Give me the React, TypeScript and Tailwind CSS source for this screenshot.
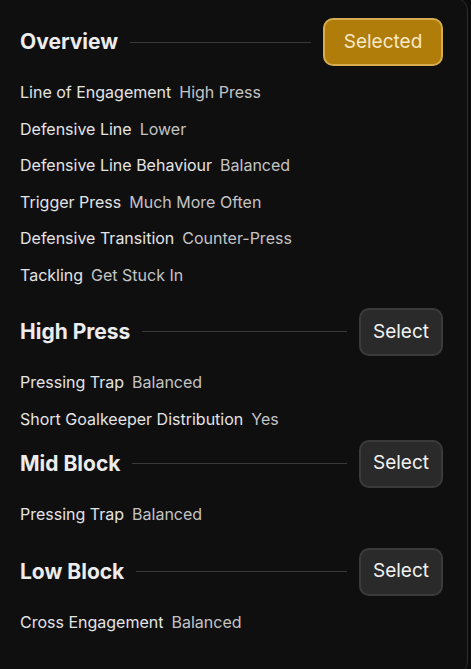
import React from 'react';

type Row = { label: string; value: string };

const sections: { title: string; selected: boolean; gap: string; rows: Row[] }[] = [
  {
    title: 'Overview',
    selected: true,
    gap: 'mt-0',
    rows: [
      { label: 'Line of Engagement', value: 'High Press' },
      { label: 'Defensive Line', value: 'Lower' },
      { label: 'Defensive Line Behaviour', value: 'Balanced' },
      { label: 'Trigger Press', value: 'Much More Often' },
      { label: 'Defensive Transition', value: 'Counter-Press' },
      { label: 'Tackling', value: 'Get Stuck In' }
    ]
  },
  {
    title: 'High Press',
    selected: false,
    gap: 'mt-[21px]',
    rows: [
      { label: 'Pressing Trap', value: 'Balanced' },
      { label: 'Short Goalkeeper Distribution', value: 'Yes' }
    ]
  },
  {
    title: 'Mid Block',
    selected: false,
    gap: 'mt-[9px]',
    rows: [{ label: 'Pressing Trap', value: 'Balanced' }]
  },
  {
    title: 'Low Block',
    selected: false,
    gap: 'mt-[22px]',
    rows: [{ label: 'Cross Engagement', value: 'Balanced' }]
  }
];

const App = () => {
  return (
    <div
      className="w-[471px] h-[669px] overflow-hidden bg-[#0b0b0c]"
      style={{ fontFamily: 'Inter, "Noto Sans", sans-serif' }}
    >
      <div className="-ml-4 -mt-[2px] w-[484px] h-[676px] rounded-xl border border-[#2c2c2f] bg-[#0f0f10] pt-[19px] pl-[35px] pr-[24px]">
        {sections.map((section) => (
          <div key={section.title} className={section.gap}>
            {/* Header */}
            <div className="flex items-center h-12 gap-3">
              <h2 className="text-[21px] font-bold text-[#ececec] whitespace-nowrap">
                {section.title}
              </h2>
              <div className="flex-1 h-px bg-[#3a3a3c]" />
              {section.selected ? (
                <button className="h-12 w-[120px] rounded-[10px] border-2 border-[#d6ac4e] bg-[#b07d0a] text-[19px] text-[#f6e8c8]">
                  Selected
                </button>
              ) : (
                <button className="h-12 w-[84px] rounded-[10px] border-2 border-[#3b3b3d] bg-[#2a2a2b] text-[19px] text-[#f2f2f2]">
                  Select
                </button>
              )}
            </div>

            {/* Rows */}
            <div className="mt-[14px] flex flex-col gap-[12.6px]">
              {section.rows.map((row, i) => (
                <div key={i} className="flex gap-2 h-6 items-center text-[16px] whitespace-nowrap">
                  <span className="text-[#e4e4e4]">{row.label}</span>
                  <span className="text-[#c4c4c4]">{row.value}</span>
                </div>
              ))}
            </div>
          </div>
        ))}
      </div>
    </div>
  );
};

export default App;
